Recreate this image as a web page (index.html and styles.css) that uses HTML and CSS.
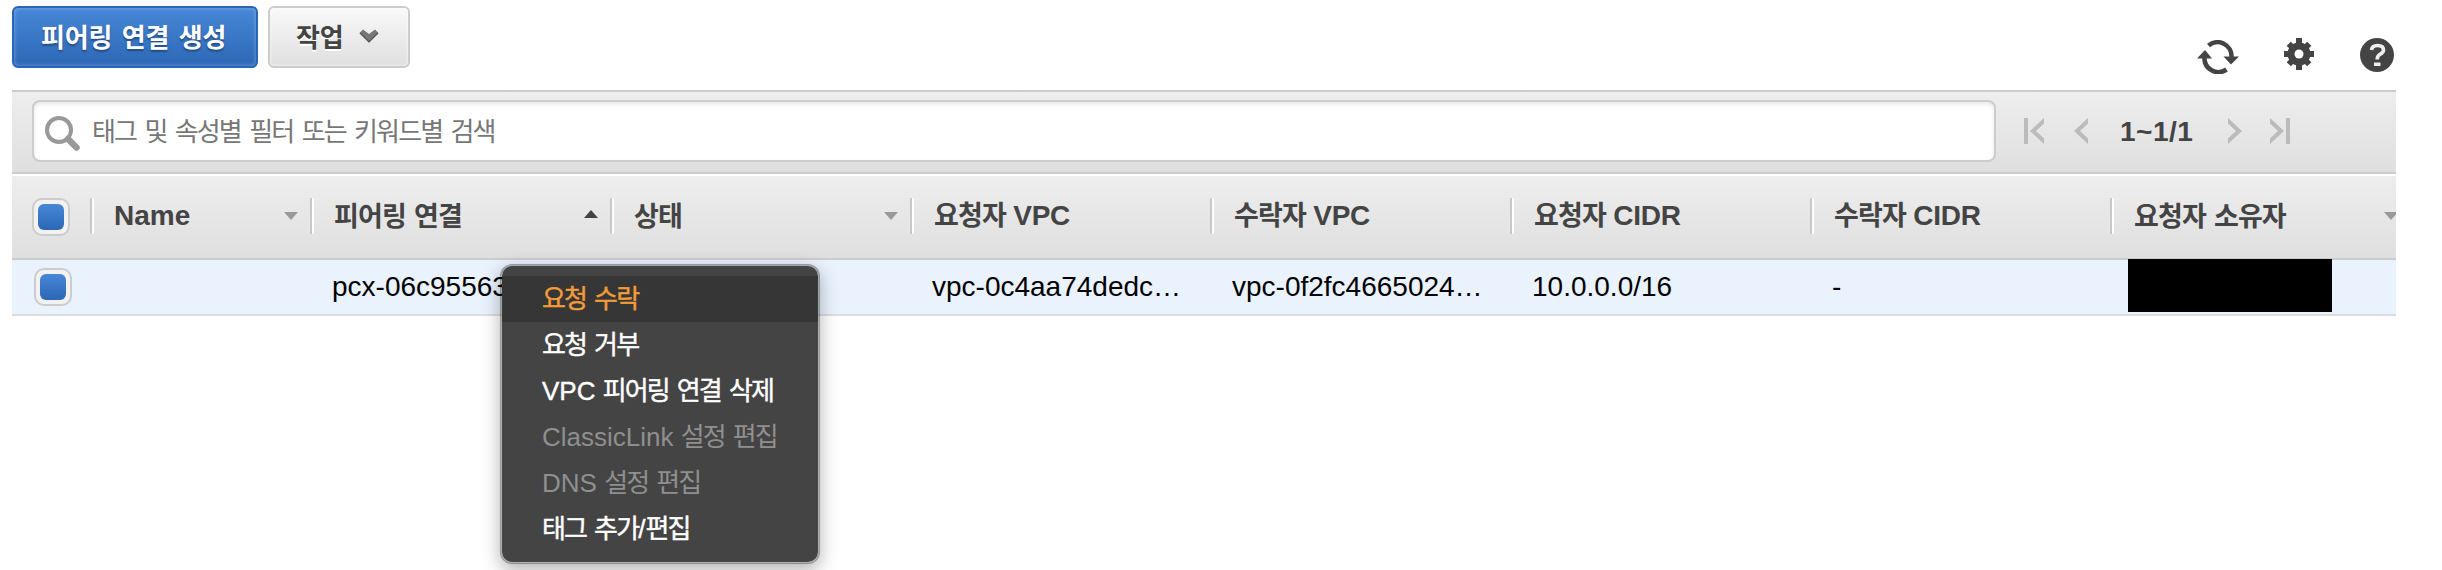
FILE: index.html
```
<!DOCTYPE html>
<html lang="ko">
<head>
<meta charset="utf-8">
<title>피어링 연결</title>
<link rel="stylesheet" href="styles.css">
</head>
<body>
<header class="actions">
  <button class="btn btn-primary"><span class="ko">피어링 연결 생성</span></button>
  <button class="btn btn-default"><span class="ko">작업</span>
    <svg class="chevron" width="20" height="14" viewBox="0 0 20 14"><path d="M.5 4L4 .5l6 4.500L16 .5 19.500 4 10 13.500z" fill="#777"/><path d="M1 4l9 9 9-9" fill="none" stroke="#555" stroke-width="1.200"/></svg>
  </button>
  <div class="tools">
    <svg class="refresh" width="42" height="34" viewBox="0 0 42 34"><g fill="none" stroke="#444" stroke-width="4.600"><path d="M11.500 5.500A14 14 0 0 1 34.500 17"/><path d="M29.500 29.500A14 14 0 0 1 7.500 17"/></g><path d="M26.500 16.500h15.500L34 24.500zM0 18.500h15L8 10z" fill="#444"/></svg>
    <svg class="gear" width="32" height="34" viewBox="-16 -17 32 34"><g fill="#444"><circle r="11.500"/><path d="M-3-16h6v32h-6z"/><path d="M-15-3h30v6h-30z"/><path d="M-3-14.500h6v29h-6z" transform="rotate(45)"/><path d="M-3-14.500h6v29h-6z" transform="rotate(-45)"/></g><circle r="4.500" fill="#fff"/></svg>
    <svg width="34" height="34" viewBox="0 0 34 34"><circle cx="17" cy="17" r="17" fill="#444"/><path d="M11.500 12q.5-4.500 6-4.500 6 0 6 4.500 0 2.500-3.500 4.300-2.800 1.600-2.800 5.200" fill="none" stroke="#eee" stroke-width="3.600"/><path d="M14 24.500h6.500v3.500H14z" fill="#eee"/></svg>
  </div>
</header>
<section class="filter">
  <div class="search">
    <svg width="36" height="36" viewBox="0 0 36 36"><circle cx="14" cy="14" r="12" fill="none" stroke="#999" stroke-width="4"/><path d="M23 23l8.500 8.500" stroke="#999" stroke-width="6.500" stroke-linecap="round"/></svg>
    <span class="ko">태그 및 속성별 필터 또는 키워드별 검색</span>
  </div>
  <nav class="pager">
    <svg width="20" height="26" viewBox="0 0 20 26"><path d="M0 0h4v26H0zM20 0v5.500L12 13l8 7.500V26L6 13z" fill="#bbb"/></svg>
    <svg class="prev" width="14" height="26" viewBox="0 0 14 26"><path d="M14 0v5.500L6 13l8 7.500V26L0 13z" fill="#bbb"/></svg>
    <span class="range">1~1/1</span>
    <svg class="next" width="14" height="26" viewBox="0 0 14 26"><path d="M0 0v5.500L8 13l-8 7.500V26L14 13z" fill="#bbb"/></svg>
    <svg class="last" width="20" height="26" viewBox="0 0 20 26"><path d="M16 0h4v26h-4zM0 0v5.500L8 13l-8 7.500V26L14 13z" fill="#bbb"/></svg>
  </nav>
</section>
<section class="grid">
  <div class="row head">
    <div class="check"><i class="box"></i></div>
    <div class="cell"><span>Name</span><i class="down"></i></div>
    <div class="cell"><span class="ko">피어링 연결</span><i class="up"></i></div>
    <div class="cell"><span class="ko">상태</span><i class="down"></i></div>
    <div class="cell"><span class="mixed"><span class="ko">요청자</span> VPC</span></div>
    <div class="cell"><span class="mixed"><span class="ko">수락자</span> VPC</span></div>
    <div class="cell"><span class="mixed"><span class="ko">요청자</span> CIDR</span></div>
    <div class="cell"><span class="mixed"><span class="ko">수락자</span> CIDR</span></div>
    <div class="cell"><span class="ko">요청자 소유자</span><i class="down"></i></div>
  </div>
  <div class="row data">
    <div class="check"><i class="box"></i></div>
    <div class="cell"></div>
    <div class="cell">pcx-06c95563</div>
    <div class="cell"></div>
    <div class="cell">vpc-0c4aa74dedc…</div>
    <div class="cell">vpc-0f2fc4665024…</div>
    <div class="cell">10.0.0.0/16</div>
    <div class="cell">-</div>
    <div class="cell"><i class="redacted"></i></div>
  </div>
</section>
<ul class="menu">
  <li class="active"><span class="ko">요청 수락</span></li>
  <li><span class="ko">요청 거부</span></li>
  <li>VPC <span class="ko">피어링 연결 삭제</span></li>
  <li class="disabled">ClassicLink <span class="ko">설정 편집</span></li>
  <li class="disabled">DNS <span class="ko">설정 편집</span></li>
  <li><span class="ko">태그 추가</span>/<span class="ko">편집</span></li>
</ul>
</body>
</html>
```
FILE: styles.css
```
* { box-sizing: border-box; }
body {
  margin: 0;
  width: 2442px;
  height: 570px;
  overflow: hidden;
  position: relative;
  background: #fff;
  padding: 6px 46px 0 12px;
  font-family: "Liberation Sans", "Noto Sans CJK KR", sans-serif;
  font-size: 28px;
  color: #000;
}
svg { display: block; flex: none; }
.ko {
  font-family: "Noto Sans CJK KR", sans-serif;
  font-size: 27px;
  letter-spacing: -0.9px;
  word-spacing: 1.5px;
  line-height: 1;
}
.actions { display: flex; gap: 10px; height: 84px; align-items: flex-start; }
.btn {
  height: 62px;
  border-radius: 6px;
  display: flex;
  align-items: center;
  font: bold 26px "Liberation Sans", "Noto Sans CJK KR", sans-serif;
}
.btn-primary {
  width: 246px;
  padding: 0 27px;
  border: 2px solid #2b65b5;
  color: #fff;
  background: linear-gradient(#4787d7, #2d67b6);
  box-shadow: inset 0 0 4px rgba(255, 255, 255, .35);
  text-shadow: 0 2px 2px rgba(0, 0, 0, .35);
}
.btn-default {
  width: 142px;
  gap: 16px;
  padding: 0 26px;
  border: 2px solid #ccc;
  color: #444;
  background: linear-gradient(#f9f9f9, #dfdfdf);
  box-shadow: inset 0 0 3px #fff;
  text-shadow: 0 2px 0 #fff;
}
.chevron { margin-bottom: 2px; }
.btn .ko {
  font-size: 26px;
  letter-spacing: -0.2px;
  word-spacing: 2.5px;
  white-space: nowrap;
  margin-bottom: 2px;
}
.tools { margin: 32px 2px 0 auto; display: flex; gap: 45px; }
.refresh { margin: 2px -1px 0 0; }
.gear { margin-top: -1px; }
.filter {
  height: 84px;
  border-top: 2px solid #ccc;
  border-bottom: 2px solid #ccc;
  background: linear-gradient(#eee, #dfdfdf);
  padding: 8px 0 0 20px;
  display: flex;
}
.search {
  width: 1964px;
  height: 62px;
  border: 2px solid #ccc;
  border-radius: 8px;
  background: #fff;
  box-shadow: inset 0 2px 4px rgba(0, 0, 0, .1);
  padding-left: 11px;
  display: flex;
  align-items: center;
  gap: 11px;
  color: #777;
}
.search svg { margin-top: 5px; }
.search .ko { font-size: 26px; letter-spacing: -1.9px; word-spacing: 3px; margin-bottom: 3px; }
.pager { display: flex; align-items: center; height: 62px; margin-left: 28px; }
.prev { margin-left: 30px; }
.range { width: 76px; margin: 2px 0 0 32px; font-weight: bold; letter-spacing: .5px; color: #444; white-space: nowrap; }
.next { margin-left: 32px; }
.last { margin-left: 28px; }
.grid { margin-top: 2px; overflow: hidden; }
.row { display: grid; grid-template-columns: 78px 220px repeat(7, 300px); }
.head {
  height: 84px;
  border-bottom: 2px solid #ccc;
  background: linear-gradient(#eee, #dfdfdf);
  color: #444;
  font-weight: bold;
}
.head .cell {
  height: 36px;
  margin-top: 22px;
  padding: 0 12px 0 22px;
  border-left: 2px solid #c8c8c8;
  box-shadow: inset 2px 0 #fff;
  display: flex;
  align-items: center;
  justify-content: space-between;
  white-space: nowrap;
}
.head .cell > .ko { margin-bottom: 3px; }
.mixed { letter-spacing: -.3px; }
.check { padding: 22px 0 0 20px; }
.box {
  display: block;
  width: 38px;
  height: 38px;
  border: 2px solid #ccc;
  border-radius: 10px;
  padding: 4px;
  background: #f2f2f2;
}
.box::before {
  content: "";
  display: block;
  width: 26px;
  height: 26px;
  border-radius: 6px;
  background: linear-gradient(#4787d7, #2d67b6);
}
.down, .up { width: 14px; height: 8px; flex: none; }
.down { background: #999; clip-path: polygon(0 0, 100% 0, 50% 100%); }
.up { background: #444; clip-path: polygon(0 100%, 100% 100%, 50% 0); margin-bottom: 4px; }
.data { height: 56px; background: #eaf2fd; border-bottom: 2px solid #ddd; }
.data .check { padding: 8px 0 0 22px; }
.data .cell { padding: 0 0 0 22px; line-height: 54px; white-space: nowrap; }
.redacted { display: block; width: 204px; height: 53px; margin: -1px 0 0 -4px; background: #000; }
.menu {
  position: absolute;
  left: 500px;
  top: 264px;
  width: 320px;
  height: 300px;
  margin: 0;
  padding: 10px 0;
  list-style: none;
  border: 2px solid rgba(0, 0, 0, .3);
  border-radius: 12px;
  background: #444 padding-box;
  box-shadow: 0 6px 18px rgba(0, 0, 0, .3);
  font-size: 26px;
  color: #fff;
  -webkit-text-stroke: .4px;
}
.menu li { height: 46px; line-height: 46px; padding-left: 40px; white-space: nowrap; }
.menu .ko { font-size: 26px; letter-spacing: -1.9px; word-spacing: 2.7px; }
.menu .active { background: #363636; color: #f19c38; }
.menu .disabled { color: #8f8f8f; -webkit-text-stroke: 0; }
```
